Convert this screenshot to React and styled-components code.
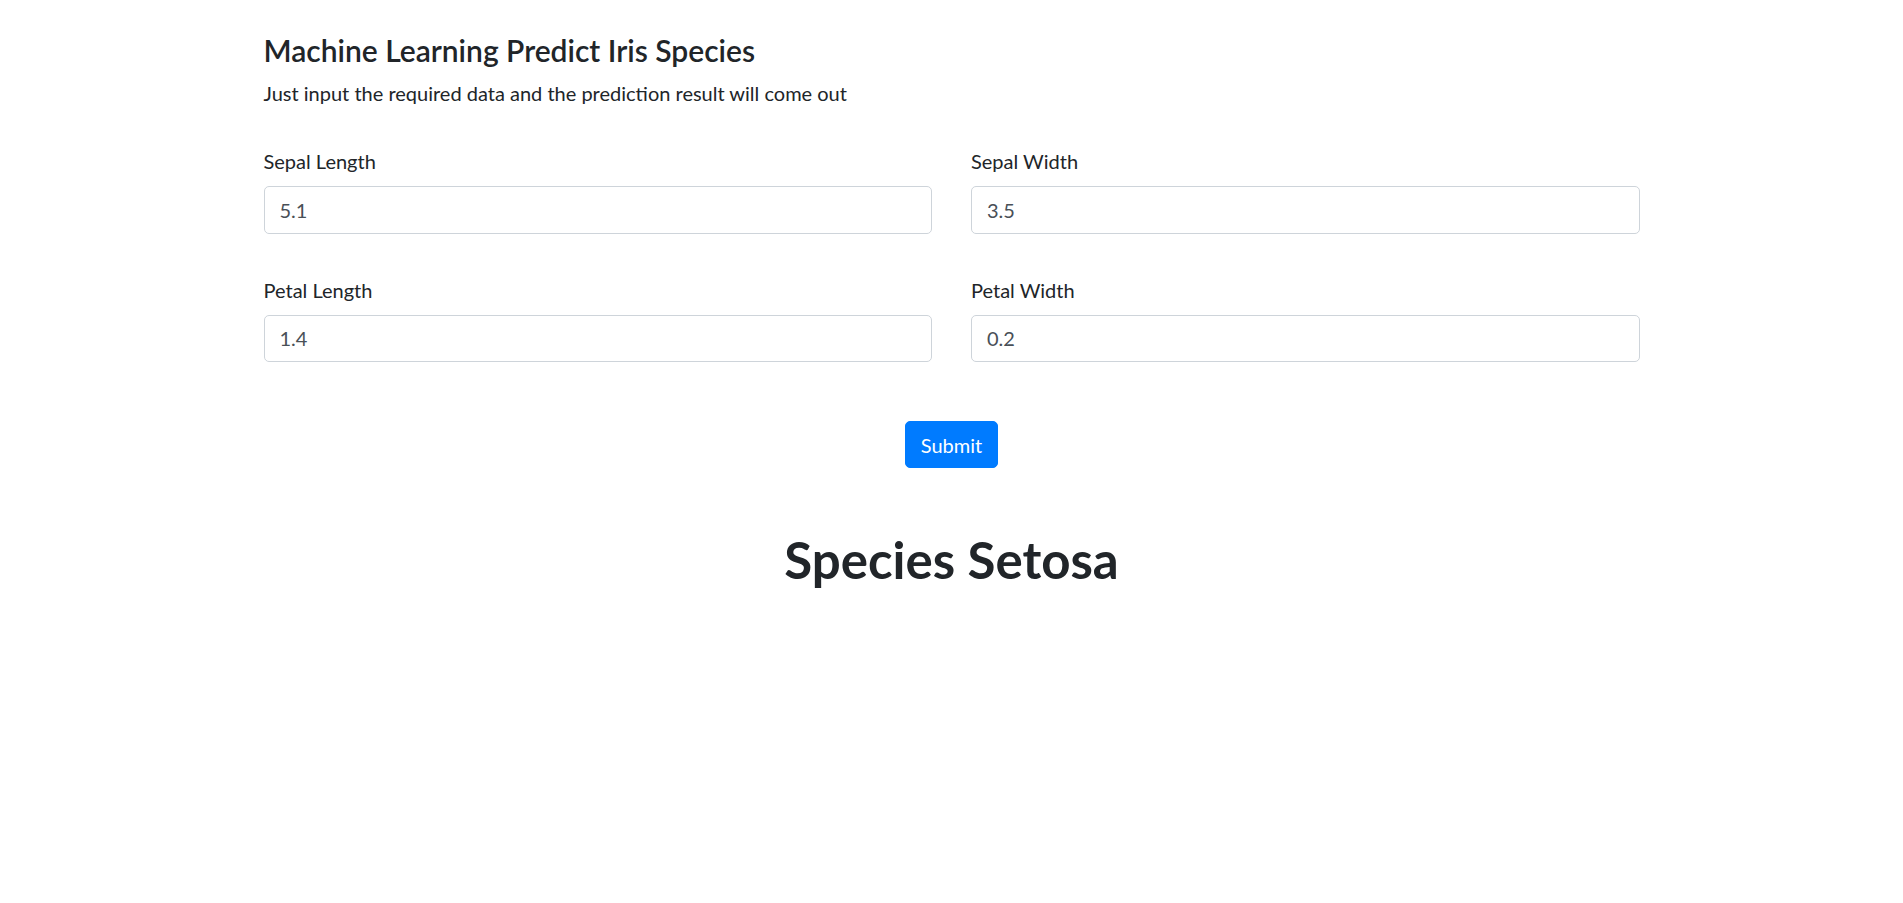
import React from "react";
import styled, { createGlobalStyle } from "styled-components";

const GlobalStyles = createGlobalStyle`
  * {
    box-sizing: border-box;
  }
  body {
    margin: 0;
    background: #fff;
    color: #212529;
    font-family: Lato, "Open Sans", "Liberation Sans", sans-serif;
    font-size: 20px;
    line-height: 1.5;
  }
`;

const fields = [
  { id: "sepal_length", label: "Sepal Length", value: "5.1" },
  { id: "sepal_width", label: "Sepal Width", value: "3.5" },
  { id: "petal_length", label: "Petal Length", value: "1.4" },
  { id: "petal_width", label: "Petal Width", value: "0.2" },
];

function App() {
  return (
    <>
      <GlobalStyles />
      <Container>
        <Title>Machine Learning Predict Iris Species</Title>
        <Lead>Just input the required data and the prediction result will come out</Lead>

        <Form onSubmit={(e) => e.preventDefault()}>
          <FieldGrid>
            {fields.map((f) => (
              <FormGroup key={f.id}>
                <Label htmlFor={f.id}>{f.label}</Label>
                <Input id={f.id} name={f.id} defaultValue={f.value} />
              </FormGroup>
            ))}
          </FieldGrid>
          <Actions>
            <SubmitButton type="submit">Submit</SubmitButton>
          </Actions>
        </Form>

        <Result>Species Setosa</Result>
      </Container>
    </>
  );
}

export default App;

const Container = styled.div`
  width: 1376px;
  margin: 0 auto;
  padding-top: 32px;
`;

const Title = styled.h4`
  margin: 0 0 10px;
  font-size: 30px;
  font-weight: 600;
  line-height: 36px;
`;

const Lead = styled.p`
  margin: 0;
  font-size: 20px;
  line-height: 30px;
`;

const Form = styled.form`
  margin-top: 38px;
`;

const FieldGrid = styled.div`
  display: grid;
  grid-template-columns: 1fr 1fr;
  column-gap: 39px;
  row-gap: 41px;
`;

const FormGroup = styled.div`
  display: flex;
  flex-direction: column;
`;

const Label = styled.label`
  margin-bottom: 10px;
  font-size: 20px;
  line-height: 30px;
`;

const Input = styled.input`
  height: 47.5px;
  padding: 7.5px 15px;
  font-family: inherit;
  font-size: 20px;
  line-height: 30px;
  color: #495057;
  background: #fff;
  border: 1.25px solid #ced4da;
  border-radius: 5px;
  outline: none;
`;

const Actions = styled.div`
  display: flex;
  justify-content: center;
  margin-top: 59px;
`;

const SubmitButton = styled.button`
  padding: 7.5px 15px;
  font-family: inherit;
  font-size: 20px;
  line-height: 30px;
  color: #fff;
  background: #007bff;
  border: 1.25px solid #007bff;
  border-radius: 5px;
  cursor: pointer;
`;

const Result = styled.h1`
  margin: 62px 0 0;
  text-align: center;
  font-size: 51px;
  font-weight: 700;
  line-height: 60px;
`;
